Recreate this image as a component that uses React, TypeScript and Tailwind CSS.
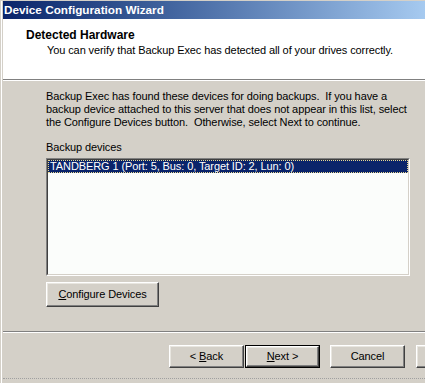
import React from 'react';

const font = { fontFamily: '"Liberation Sans", Arial, sans-serif' };

function Button({ children, isDefault = false, className = '' }: { children?: React.ReactNode; isDefault?: boolean; className?: string }) {
  return (
    <div className={`h-[23px] shrink-0 ${isDefault ? 'border border-black' : ''} ${className}`}>
      <div className="h-full border-t border-l border-white border-r border-b border-r-[#404040] border-b-[#404040] bg-[#d4d0c8] shadow-[inset_-1px_-1px_0_#808080,inset_1px_1px_0_#e8e6e0] flex items-center justify-center text-[11px] text-black">
        {children}
      </div>
    </div>
  );
}

export default function App() {
  return (
    <div className="w-[425px] h-[383px] overflow-hidden bg-[#d4d0c8] border-t border-[#d4d0c8] text-black tracking-[-0.1px]" style={font}>
      <div className="h-full border-l border-[#d4d0c8]">
        <div className="h-full border-l border-white">
          <div className="h-full border-l border-[#d4d0c8] flex flex-col">
            {/* title bar */}
            <div className="h-[18px] bg-gradient-to-r from-[#0a246a] to-[#a6caf0] flex items-center pl-[1px]">
              <span className="text-[11.75px] font-bold text-white leading-none tracking-normal">Device Configuration Wizard</span>
            </div>

            {/* header */}
            <div className="h-[60px] bg-white pl-[23px] pt-[10px]">
              <div className="text-[12px] font-bold leading-[13px] tracking-normal">Detected Hardware</div>
              <div className="text-[11px] leading-[13px] pl-[21px] mt-[2px]">
                You can verify that Backup Exec has detected all of your drives correctly.
              </div>
            </div>
            <div className="h-px bg-[#808080]" />
            <div className="h-px bg-white" />

            {/* body */}
            <div className="pl-[43px] pr-[15px] pt-[9px] flex flex-col">
              <p className="text-[11px] leading-[13px] whitespace-nowrap">
                Backup Exec has found these devices for doing backups.&nbsp; If you have a<br />
                backup device attached to this server that does not appear in this list, select<br />
                the Configure Devices button.&nbsp; Otherwise, select Next to continue.
              </p>
              <div className="text-[11px] leading-[13px] mt-[12px]">Backup devices</div>

              <div className="mt-[4px] h-[118px] border-t border-l border-[#808080] border-r border-b border-r-white border-b-white">
                <div className="h-full border-t border-l border-[#404040] border-r border-b border-r-[#d4d0c8] border-b-[#d4d0c8] bg-[#fbfdfb]">
                  <div className="h-[13px] bg-[#0a246a] border border-dotted border-[#e8d890] flex items-center pl-[1px]">
                    <span className="text-[11px] text-white leading-none">TANDBERG 1 (Port: 5, Bus: 0, Target ID: 2, Lun: 0)</span>
                  </div>
                </div>
              </div>

              <div className="mt-[6px] flex">
                <Button className="w-[113px] h-[25px]">
                  <span><span className="underline">C</span>onfigure Devices</span>
                </Button>
              </div>
            </div>

            <div className="mt-[24px] h-px bg-[#808080]" />
            <div className="h-px bg-white" />

            {/* footer buttons */}
            <div className="flex pl-[166px] mt-[12px]">
              <Button className="w-[75px]">
                <span>&lt; <span className="underline">B</span>ack</span>
              </Button>
              <Button isDefault className="w-[75px] ml-px">
                <span><span className="underline">N</span>ext &gt;</span>
              </Button>
              <Button className="w-[75px] ml-[10px]">
                <span>Cancel</span>
              </Button>
              <Button className="w-[75px] ml-[11px]" />
            </div>
            <div className="mt-[10px] border-b border-dotted border-[#a0a0a0]" />
          </div>
        </div>
      </div>
    </div>
  );
}
